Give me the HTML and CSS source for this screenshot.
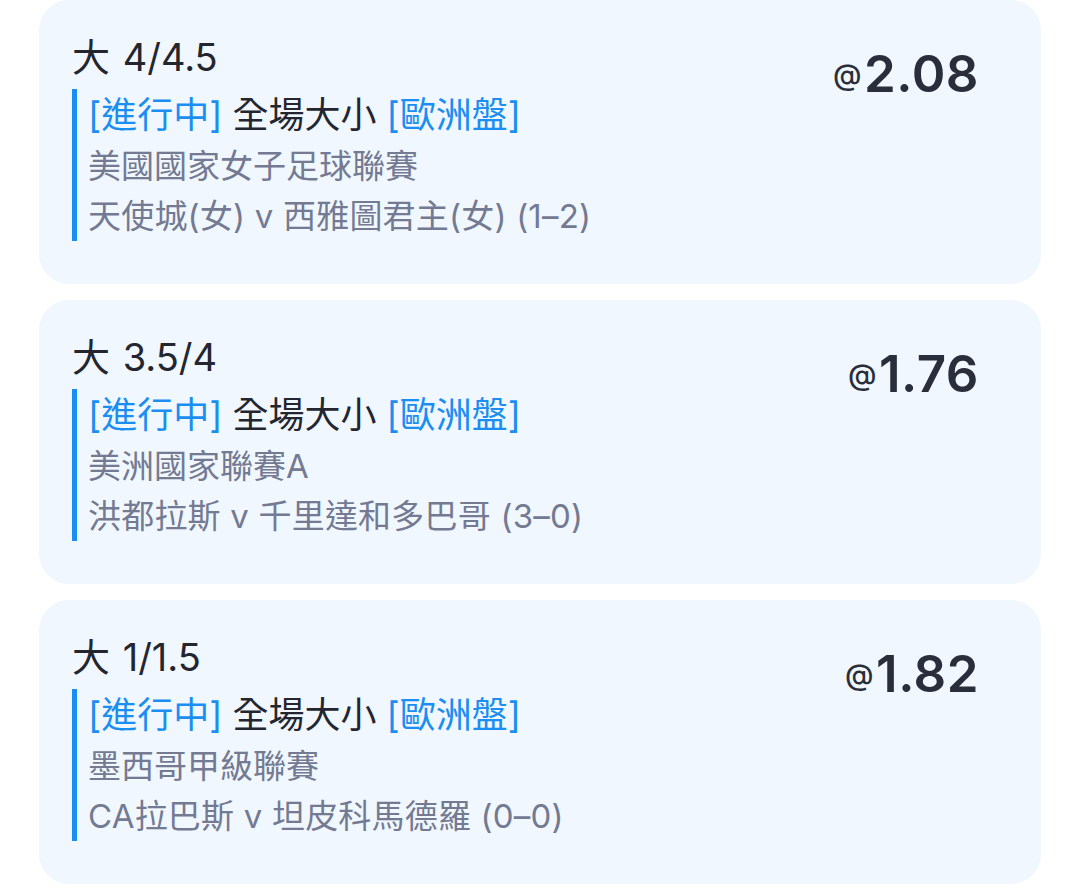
FILE: index.html
```html
<!DOCTYPE html>
<html lang="zh-Hant">
<head>
  <meta charset="UTF-8" />
  <meta name="viewport" content="width=device-width, initial-scale=1" />
  <title>投注記錄</title>
  <link rel="stylesheet" href="styles.css">
</head>
<body>

  <div class="bets">

    <div class="bet-card">
      <div class="bet-info">
        <div class="bet-pick">大 4/4.5</div>
        <div class="bet-detail">
          <div class="bet-market"><span class="tag">[進行中]</span> 全場大小 <span class="tag">[歐洲盤]</span></div>
          <div class="bet-league">美國國家女子足球聯賽</div>
          <div class="bet-match">天使城(女) v 西雅圖君主(女) (1–2)</div>
        </div>
      </div>
      <div class="bet-odds"><span class="at">@</span>2.08</div>
    </div>

    <div class="bet-card">
      <div class="bet-info">
        <div class="bet-pick">大 3.5/4</div>
        <div class="bet-detail">
          <div class="bet-market"><span class="tag">[進行中]</span> 全場大小 <span class="tag">[歐洲盤]</span></div>
          <div class="bet-league">美洲國家聯賽A</div>
          <div class="bet-match">洪都拉斯 v 千里達和多巴哥 (3–0)</div>
        </div>
      </div>
      <div class="bet-odds"><span class="at">@</span>1.76</div>
    </div>

    <div class="bet-card">
      <div class="bet-info">
        <div class="bet-pick">大 1/1.5</div>
        <div class="bet-detail">
          <div class="bet-market"><span class="tag">[進行中]</span> 全場大小 <span class="tag">[歐洲盤]</span></div>
          <div class="bet-league">墨西哥甲級聯賽</div>
          <div class="bet-match">CA拉巴斯 v 坦皮科馬德羅 (0–0)</div>
        </div>
      </div>
      <div class="bet-odds"><span class="at">@</span>1.82</div>
    </div>

  </div>

</body>
</html>
```

FILE: styles.css
```css
* {
  margin: 0;
  padding: 0;
  box-sizing: border-box;
  font-family: Inter, 'Noto Sans CJK TC', sans-serif;
}

body {
  background: #ffffff;
  color: #23262e;
}

.bets {
  display: flex;
  flex-direction: column;
  gap: 16px;
  padding: 0 39px;
}

.bet-card {
  height: 284px;
  background: #f1f7fe;
  border-radius: 30px;
  display: flex;
  justify-content: space-between;
  align-items: flex-start;
  padding: 35px 62px 0 33px;
}

.bet-pick {
  font-size: 38px;
  line-height: 44px;
  color: #23262e;
  margin-bottom: 10px;
  word-spacing: 2px;
}

.bet-detail {
  border-left: 5px solid #1b8ef2;
  padding-left: 11px;
}

.bet-market {
  font-size: 36px;
  line-height: 52px;
  color: #23262e;
}

.tag {
  color: #1b8ef2;
}

.bet-league,
.bet-match {
  font-size: 33px;
  line-height: 50px;
  color: #737a92;
}

.bet-match {
  letter-spacing: 0.2px;
}

.bet-odds {
  font-size: 51px;
  font-weight: 600;
  line-height: 60px;
  margin-top: 9px;
  color: #2a2e3a;
  letter-spacing: 0.5px;
}

.bet-odds .at {
  font-size: 29px;
  font-weight: 500;
  vertical-align: 7px;
  margin-right: 2px;
}
```
